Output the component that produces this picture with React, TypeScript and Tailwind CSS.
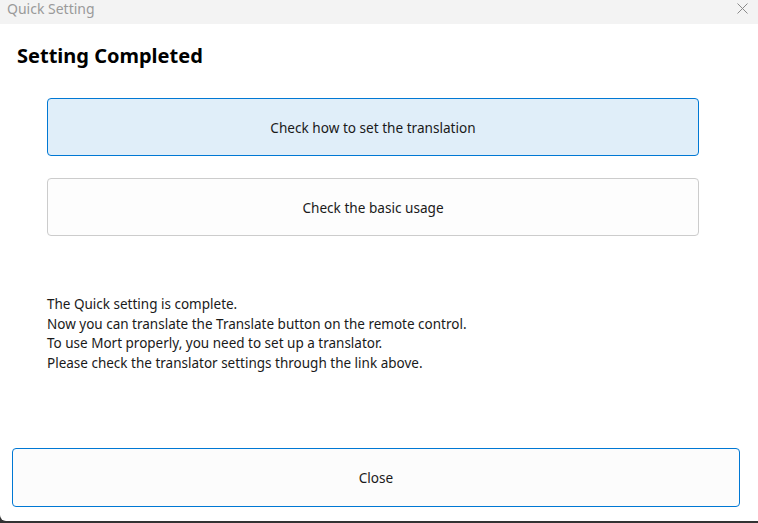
export default function App() {
  return (
    <div className="w-[758px] h-[523px] bg-[#333333] overflow-hidden font-['Noto_Sans','Liberation_Sans',sans-serif]">
      <div className="h-[521px] bg-white rounded-bl-[6px] flex flex-col">
        <div className="h-[24px] bg-[#f3f3f3] flex items-start justify-between pl-[7px] pr-[10px]">
          <span className="text-[14px] leading-[18px] text-[#9a9a9a]">Quick Setting</span>
          <svg width="11" height="11" viewBox="0 0 11 11" className="mt-[3px]">
            <path d="M0.5 0.5 L10.5 10.5 M10.5 0.5 L0.5 10.5" stroke="#8a8a8a" strokeWidth="1" />
          </svg>
        </div>
        <h1 className="mt-[18px] ml-[17px] text-[20px] font-bold text-black leading-[28px]">Setting Completed</h1>
        <div className="mt-[28px] ml-[47px] mr-[59px] flex flex-col gap-[22px]">
          <button className="h-[58px] pt-[2px] rounded-[4px] border border-[#0078d4] bg-[#e0eef9] text-[13.6px] text-[#1a1a1a]">
            Check how to set the translation
          </button>
          <button className="h-[58px] pt-[2px] rounded-[4px] border border-[#cccccc] bg-[#fdfdfd] text-[13.6px] text-[#1a1a1a]">
            Check the basic usage
          </button>
        </div>
        <div className="mt-[59px] ml-[47px] text-[13.5px] leading-[19.5px] text-[#1a1a1a]">
          <p>The Quick setting is complete.</p>
          <p>Now you can translate the Translate button on the remote control.</p>
          <p>To use Mort properly, you need to set up a translator.</p>
          <p>Please check the translator settings through the link above.</p>
        </div>
        <div className="flex-1" />
        <button className="ml-[12px] mr-[18px] mb-[14px] h-[59px] pt-[2px] rounded-[4px] border border-[#0078d4] bg-[#fcfcfc] text-[13.6px] text-[#1a1a1a]">
          Close
        </button>
      </div>
    </div>
  );
}
